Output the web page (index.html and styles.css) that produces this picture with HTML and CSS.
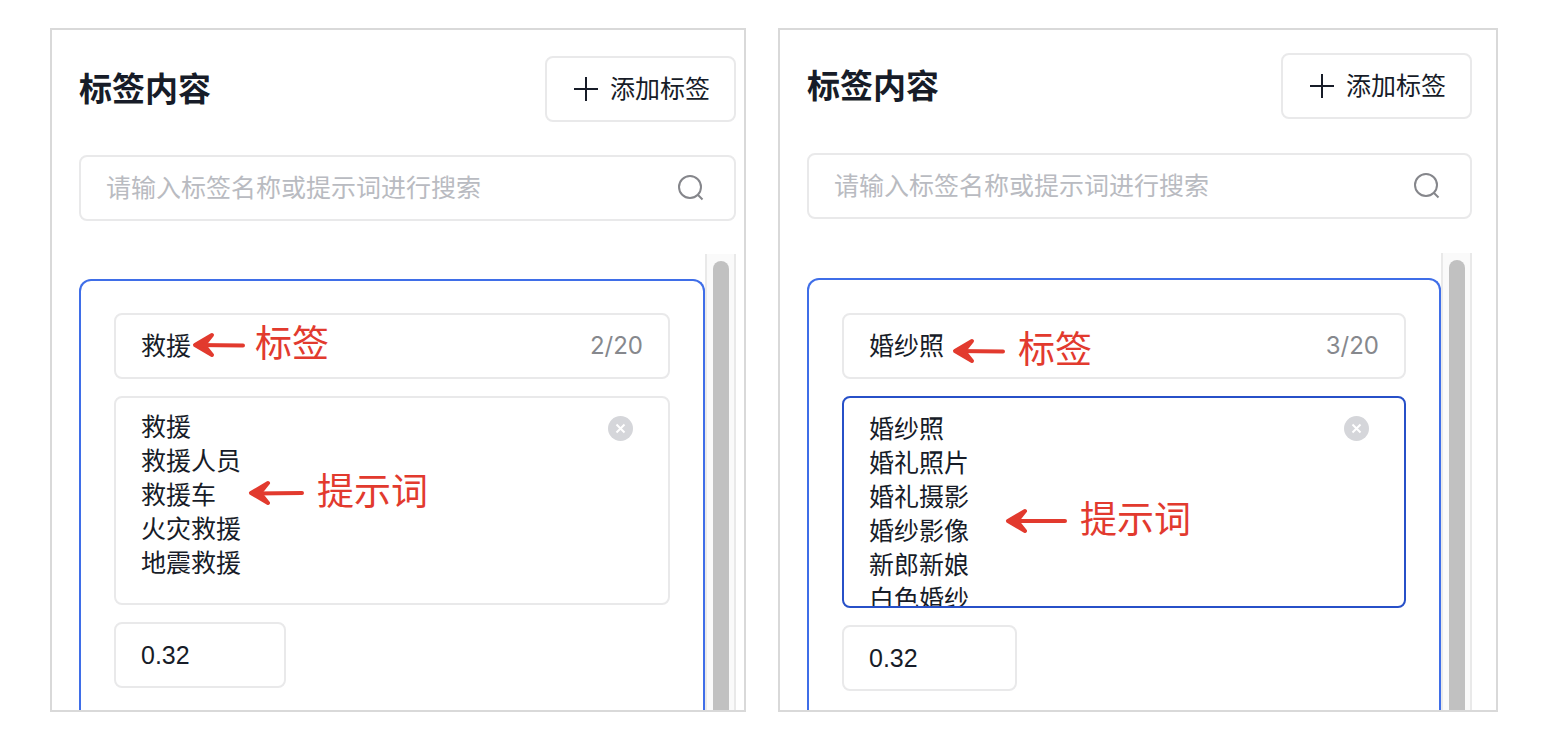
FILE: index.html
```html
<!DOCTYPE html>
<html lang="zh-CN">
<head>
<meta charset="utf-8">
<meta name="viewport" content="width=device-width, initial-scale=1">
<title>标签内容</title>
<link rel="stylesheet" href="styles.css">
</head>
<body>
<main class="page">
  <section class="panel">
    <header class="panel-head">
      <h2 class="title">标签内容</h2>
      <button class="add" type="button">
        <svg class="add-icon" viewBox="0 0 26 26" aria-hidden="true"><path d="M13 1v24M1 13h24"/></svg>
        添加标签
      </button>
    </header>
    <div class="box search">
      <input class="search-input" type="text" placeholder="请输入标签名称或提示词进行搜索" aria-label="搜索标签">
      <svg class="search-icon" viewBox="0 0 26 26" aria-hidden="true"><circle cx="12" cy="12" r="11"/><path d="M20 20l4.500 4.500"/></svg>
    </div>
    <div class="scroller">
      <div class="card">
        <div class="box field">
          <input class="field-input" id="tag-a" type="text" value="救援" maxlength="20">
          <span class="count">2/20</span>
          <label class="note note-tag" for="tag-a">
            <svg class="arrow" width="53" height="26" viewBox="0 0 53 26" aria-hidden="true"><path class="head" d="M20 3L3 13L20 23L12 13Z"/><path class="shaft" d="M5 13L51 13.500"/></svg>
            标签
          </label>
        </div>
        <div class="prompts">
          <textarea class="box prompt-input" id="prompt-a">救援
救援人员
救援车
火灾救援
地震救援</textarea>
          <button class="clear" type="button" aria-label="清空">
            <svg class="clear-icon" viewBox="0 0 25 25" aria-hidden="true"><circle cx="12.500" cy="12.500" r="12.500"/><path d="M8.500 8.500l8 8M16.500 8.500l-8 8"/></svg>
          </button>
          <label class="note note-prompt" for="prompt-a">
            <svg class="arrow" width="56" height="26" viewBox="0 0 56 26" aria-hidden="true"><path class="head" d="M20 3L3 13L20 23L12 13Z"/><path class="shaft" d="M5 13.500L54 13"/></svg>
            提示词
          </label>
        </div>
        <input class="box score" type="text" inputmode="decimal" value="0.32" aria-label="阈值">
      </div>
      <div class="track"><div class="thumb"></div></div>
    </div>
  </section>

  <section class="panel panel-wide">
    <header class="panel-head">
      <h2 class="title">标签内容</h2>
      <button class="add" type="button">
        <svg class="add-icon" viewBox="0 0 26 26" aria-hidden="true"><path d="M13 1v24M1 13h24"/></svg>
        添加标签
      </button>
    </header>
    <div class="box search">
      <input class="search-input" type="text" placeholder="请输入标签名称或提示词进行搜索" aria-label="搜索标签">
      <svg class="search-icon" viewBox="0 0 26 26" aria-hidden="true"><circle cx="12" cy="12" r="11"/><path d="M20 20l4.500 4.500"/></svg>
    </div>
    <div class="scroller">
      <div class="card">
        <div class="box field">
          <input class="field-input" id="tag-b" type="text" value="婚纱照" maxlength="20">
          <span class="count">3/20</span>
          <label class="note note-tag" for="tag-b">
            <svg class="arrow" width="53" height="26" viewBox="0 0 53 26" aria-hidden="true"><path class="head" d="M20 3L3 13L20 23L12 13Z"/><path class="shaft" d="M5 13L51 13.500"/></svg>
            标签
          </label>
        </div>
        <div class="prompts">
          <textarea class="box prompt-input active" id="prompt-b">婚纱照
婚礼照片
婚礼摄影
婚纱影像
新郎新娘
白色婚纱</textarea>
          <button class="clear" type="button" aria-label="清空">
            <svg class="clear-icon" viewBox="0 0 25 25" aria-hidden="true"><circle cx="12.500" cy="12.500" r="12.500"/><path d="M8.500 8.500l8 8M16.500 8.500l-8 8"/></svg>
          </button>
          <label class="note note-prompt" for="prompt-b">
            <svg class="arrow" width="62" height="26" viewBox="0 0 62 26" aria-hidden="true"><path class="head" d="M20 3L3 13L20 23L12 13Z"/><path class="shaft" d="M5 13H60"/></svg>
            提示词
          </label>
        </div>
        <input class="box score" type="text" inputmode="decimal" value="0.32" aria-label="阈值">
      </div>
      <div class="track"><div class="thumb"></div></div>
    </div>
  </section>
</main>
</body>
</html>
```
FILE: styles.css
```css
* {
  box-sizing: border-box;
}

body {
  margin: 0;
  background: #fff;
  color: #171c28;
  font-family: "Liberation Sans", "Noto Sans CJK SC", sans-serif;
  font-size: 25px;
  line-height: 34px;
}

button,
input,
textarea {
  margin: 0;
  color: inherit;
  font: inherit;
}

.page {
  display: grid;
  grid-template-columns: 29fr 30fr;
  gap: 32px;
  height: 100vh;
  padding: 28px 54px 40px 50px;
}

.panel {
  display: flex;
  flex-direction: column;
  gap: 33px;
  min-width: 0;
  min-height: 0;
  padding: 26px 8px 0 27px;
  overflow: hidden;
  border: 2px solid #d9d9d9;
}

.panel-wide {
  gap: 34px;
  padding-top: 23px;
  padding-right: 24px;
}

.panel-head {
  display: flex;
  align-items: center;
  justify-content: space-between;
}

.title {
  margin: 0;
  padding-top: 2px;
  font-size: 33px;
  font-weight: 700;
  line-height: 40px;
}

.box,
.add {
  background: #fff;
  border: 2px solid #e9e9ea;
  border-radius: 8px;
}

.add {
  display: flex;
  align-items: center;
  gap: 11px;
  height: 66px;
  padding: 0 24px 0 26px;
  white-space: nowrap;
}

.add-icon {
  width: 26px;
  height: 26px;
  fill: none;
  stroke: currentColor;
  stroke-width: 2;
}

.search {
  display: flex;
  flex: none;
  align-items: center;
  height: 66px;
  padding: 0 30px 0 25px;
}

.search-input,
.field-input {
  flex: 1;
  min-width: 0;
  padding: 0;
  background: none;
  border: 0;
  outline: 0;
}

.search-input::placeholder {
  color: #b9bbc1;
  opacity: 1;
}

.search-icon {
  width: 26px;
  height: 26px;
  fill: none;
  stroke: #85868b;
  stroke-width: 2;
}

.scroller {
  display: flex;
  flex: 1;
  min-height: 0;
  overflow: hidden;
}

.card {
  display: flex;
  flex: 1;
  flex-direction: column;
  gap: 17px;
  min-width: 0;
  margin-top: 25px;
  padding: 32px 33px 0;
  border: 2px solid #3f6ee8;
  border-bottom: 0;
  border-radius: 12px 12px 0 0;
}

.panel-wide .card {
  padding-top: 33px;
}

.field {
  position: relative;
  display: flex;
  flex: none;
  align-items: center;
  height: 66px;
  padding: 0 25px;
}

.count {
  color: #86888d;
  font-family: Inter, sans-serif;
  font-size: 24px;
}

.prompts {
  position: relative;
  display: flex;
}

.prompt-input {
  width: 100%;
  height: 209px;
  padding: 12px 80px 0 25px;
  overflow: hidden;
  outline: 0;
  resize: none;
}

.panel-wide .prompt-input {
  height: 212px;
  padding-top: 14px;
}

.prompt-input.active {
  border-color: #2750c8;
}

.clear {
  position: absolute;
  top: 20px;
  right: 37px;
  display: flex;
  padding: 0;
  background: none;
  border: 0;
}

.clear-icon {
  width: 25px;
  height: 25px;
  fill: #d5d6da;
  stroke: #fff;
  stroke-width: 2;
}

.clear-icon circle {
  stroke: none;
}

.score {
  width: 31%;
  height: 66px;
  padding: 0 25px;
}

.note {
  position: absolute;
  display: flex;
  align-items: center;
  gap: 13px;
  color: #e23a2e;
  font-size: 37px;
  line-height: 40px;
  white-space: nowrap;
}

.note-tag {
  top: 10px;
  left: 76px;
  gap: 10px;
}

.note-prompt {
  top: 77px;
  left: 134px;
}

.panel-wide .note-tag {
  top: 16px;
  left: 108px;
  gap: 13px;
}

.panel-wide .note-prompt {
  top: 105px;
  left: 163px;
}

.arrow {
  fill: none;
  stroke: currentColor;
  stroke-linecap: round;
  stroke-linejoin: round;
}

.head {
  fill: currentColor;
  stroke-width: 4;
}

.shaft {
  stroke-width: 4;
}

.track {
  width: 31px;
  padding: 7px 5px 0 6px;
  background: #fafafa;
  border: solid #e9e9e9;
  border-width: 0 2px;
}

.thumb {
  height: 100%;
  background: #c1c1c1;
  border-radius: 9px 9px 0 0;
}
```
